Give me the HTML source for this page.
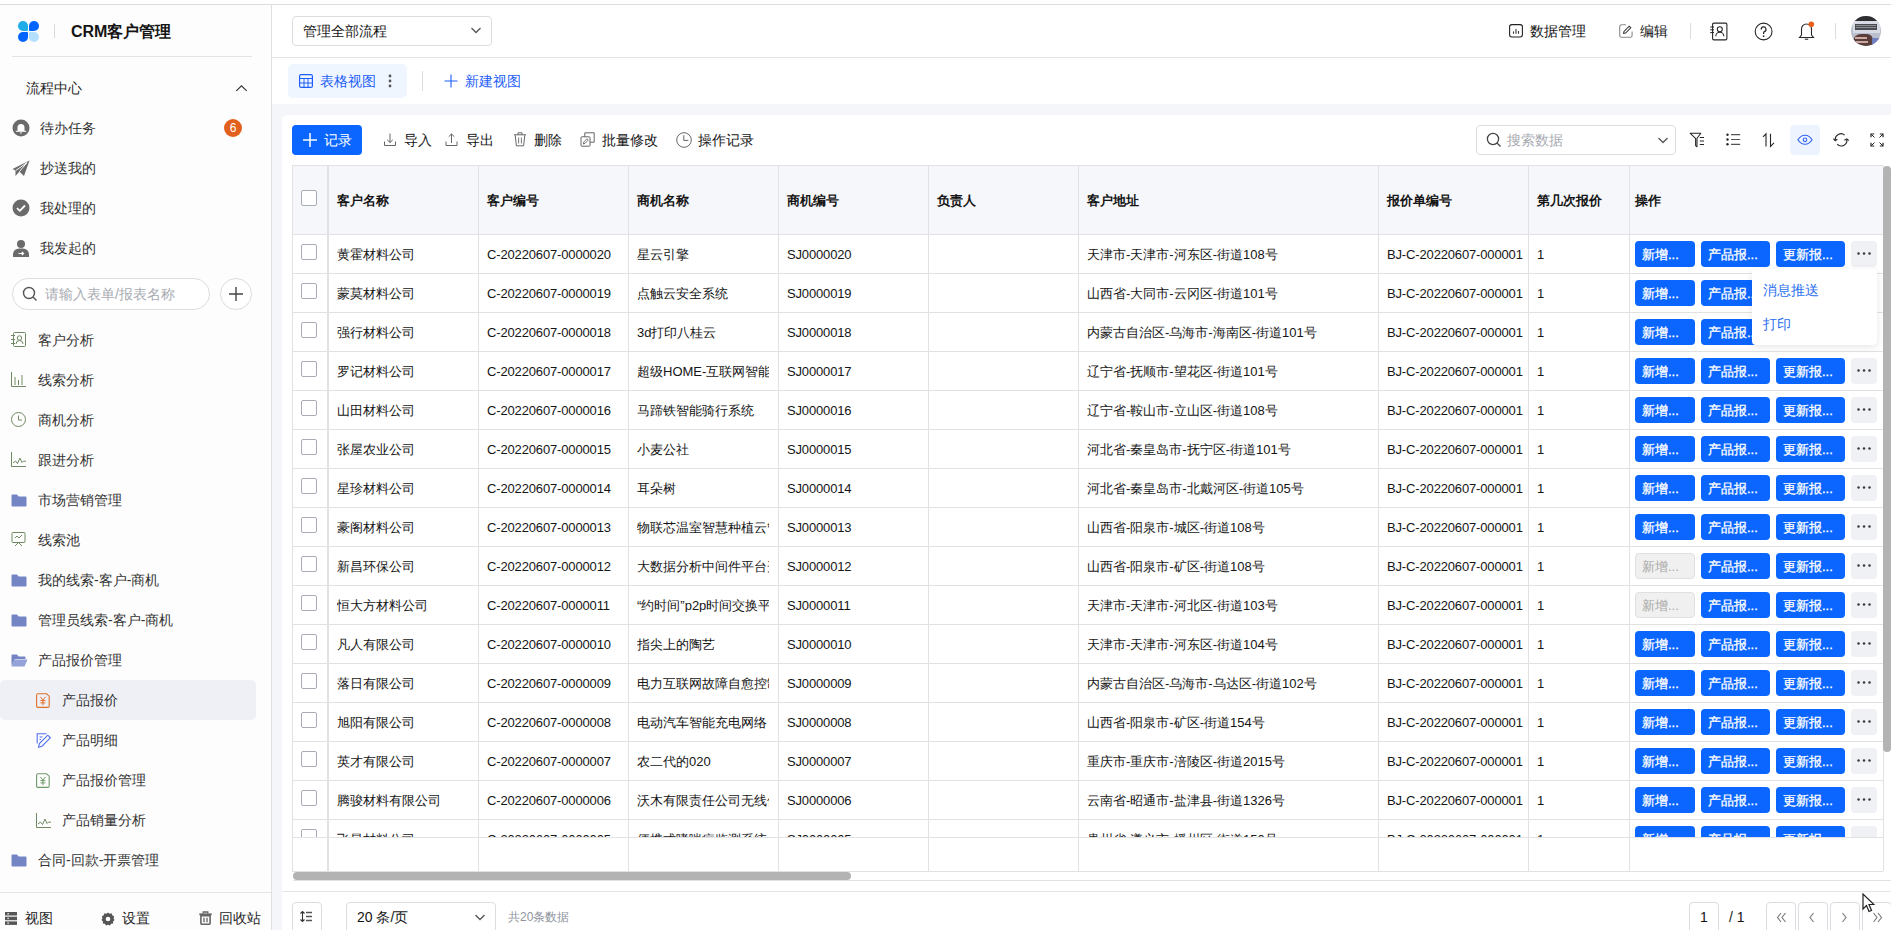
<!DOCTYPE html><html><head><meta charset="utf-8"><style>
*{box-sizing:border-box;margin:0;padding:0}
html,body{width:1891px;height:930px;overflow:hidden;background:#fff;font-family:"Liberation Sans",sans-serif;color:#151515}
.abs{position:absolute}
.t{position:absolute;white-space:nowrap;line-height:1}
svg{display:block}
</style></head><body>

<div class="abs" style="left:0;top:0;width:1891px;height:4px;background:#fff"></div>
<div class="abs" style="left:0;top:4px;width:1891px;height:1px;background:#dcdde0"></div>
<div class="abs" style="left:0;top:5px;width:271px;height:925px;background:#fdfdfd"></div>
<div class="abs" style="left:271px;top:5px;width:1px;height:925px;background:#dfe0e3"></div>
<div class="abs" style="left:18px;top:21px;width:9.5px;height:9.5px;border-radius:5px 5px 1px 5px;background:#1fade8"></div>
<div class="abs" style="left:29px;top:21px;width:9.5px;height:9.5px;border-radius:5px 5px 5px 1px;background:#0064ff"></div>
<div class="abs" style="left:18px;top:32px;width:9.5px;height:9.5px;border-radius:5px 1px 5px 5px;background:#0064ff"></div>
<div class="abs" style="left:29px;top:32px;width:9.5px;height:9.5px;border-radius:1px 5px 5px 5px;background:#b3e0fd"></div>
<div class="abs" style="left:54px;top:24px;width:1px;height:14px;background:#d9d9d9"></div>
<div class="t" style="left:71px;top:24px;font-size:16px;font-weight:bold;color:#151515">CRM客户管理</div>
<div class="abs" style="left:12px;top:56px;width:240px;height:1px;background:#e3e4e7"></div>
<div class="t" style="left:26px;top:81px;font-size:14px;color:#262626">流程中心</div>
<div class="abs" style="left:235px;top:85px"><svg width="13" height="7" viewBox="0 0 13 7" ><path d="M1.3 5.8L6.5 0.8L11.7 5.8" fill="none" stroke="#333" stroke-width="1.1"/></svg></div>
<div class="t" style="left:40px;top:121px;font-size:14px;color:#333">待办任务</div>
<div class="abs" style="left:12px;top:119px"><svg width="18" height="18" viewBox="0 0 18 18" ><circle cx="9" cy="9" r="8.5" fill="#6b6b6b"/><path d="M5.5 12V8.5A3.5 3.5 0 0 1 12.5 8.5V12Z" fill="#fff"/><rect x="3.8" y="11.8" width="10.4" height="1" fill="#fff"/><path d="M7.8 13.5H10.2L9 15Z" fill="#fff"/></svg></div>
<div class="abs" style="left:224px;top:119px;width:18px;height:18px;border-radius:9px;background:#e2601d;color:#fff;font-size:12px;line-height:18px;text-align:center">6</div>
<div class="t" style="left:40px;top:161px;font-size:14px;color:#333">抄送我的</div>
<div class="abs" style="left:12px;top:160px"><svg width="18" height="17" viewBox="0 0 18 17" ><path d="M0.5 9L17.5 0.5L12 16L7.5 11.5L3.5 16V10.5Z" fill="#6b6b6b"/><path d="M3.8 10.5L15 2.5L7.5 11.5" fill="none" stroke="#fdfdfd" stroke-width="1"/></svg></div>
<div class="t" style="left:40px;top:201px;font-size:14px;color:#333">我处理的</div>
<div class="abs" style="left:12px;top:199px"><svg width="18" height="18" viewBox="0 0 18 18" ><circle cx="9" cy="9" r="8.5" fill="#6b6b6b"/><path d="M5 9.2L7.8 11.8L13 6.5" fill="none" stroke="#fff" stroke-width="1.8"/></svg></div>
<div class="t" style="left:40px;top:241px;font-size:14px;color:#333">我发起的</div>
<div class="abs" style="left:12px;top:239px"><svg width="18" height="18" viewBox="0 0 18 18" ><circle cx="9" cy="5" r="4" fill="#6b6b6b"/><path d="M1 18V15A6 6 0 0 1 7 9.5H11A6 6 0 0 1 17 15V18Z" fill="#6b6b6b"/><path d="M6.5 14.5H11.5M9.8 12.8L11.5 14.5L9.8 16.2" fill="none" stroke="#fff" stroke-width="1.2"/></svg></div>
<div class="abs" style="left:12px;top:278px;width:198px;height:32px;border:1px solid #dcdde0;border-radius:16px;background:#fff"></div>
<div class="abs" style="left:22px;top:286px"><svg width="16" height="16" viewBox="0 0 16 16" ><circle cx="7" cy="7" r="5.5" fill="none" stroke="#555" stroke-width="1.4"/><path d="M11 11L14.5 14.5" stroke="#555" stroke-width="1.4"/></svg></div>
<div class="t" style="left:45px;top:287px;font-size:14px;color:#a8abb2">请输入表单/报表名称</div>
<div class="abs" style="left:220px;top:278px;width:32px;height:32px;border:1px solid #dcdde0;border-radius:16px;background:#fff"></div>
<div class="abs" style="left:229px;top:287px"><svg width="14" height="14" viewBox="0 0 14 14" ><path d="M7 0V14M0 7H14" stroke="#444" stroke-width="1.4"/></svg></div>
<div class="t" style="left:38px;top:333px;font-size:14px;color:#333">客户分析</div>
<div class="abs" style="left:11px;top:332px"><svg width="15" height="15" viewBox="0 0 15 15" ><rect x="2.5" y="0.5" width="12" height="14" rx="1" fill="none" stroke="#6f8a62" stroke-width="1"/><circle cx="8.5" cy="6" r="2.2" fill="none" stroke="#6f8a62"/><path d="M5 12A3.5 3.5 0 0 1 12 12" fill="none" stroke="#6f8a62"/><path d="M0 3.5H4M0 7.5H4M0 11.5H4" stroke="#6f8a62"/></svg></div>
<div class="t" style="left:38px;top:373px;font-size:14px;color:#333">线索分析</div>
<div class="abs" style="left:11px;top:372px"><svg width="15" height="15" viewBox="0 0 15 15" ><path d="M0.5 0V14.5H15" fill="none" stroke="#6f8a62"/><path d="M4 5V13M7.5 8V13M11 3V13" stroke="#6f8a62"/></svg></div>
<div class="t" style="left:38px;top:413px;font-size:14px;color:#333">商机分析</div>
<div class="abs" style="left:11px;top:412px"><svg width="15" height="15" viewBox="0 0 15 15" ><circle cx="7.5" cy="7.5" r="7" fill="none" stroke="#6f8a62"/><path d="M7.5 3.5V8H11" fill="none" stroke="#6f8a62"/></svg></div>
<div class="t" style="left:38px;top:453px;font-size:14px;color:#333">跟进分析</div>
<div class="abs" style="left:11px;top:452px"><svg width="15" height="15" viewBox="0 0 15 15" ><path d="M0.5 0V14.5H15" fill="none" stroke="#6f8a62"/><path d="M2 11L4.5 9L6.5 11.5L9 6L11 10.5L12.3 9.2H15" fill="none" stroke="#6f8a62"/></svg></div>
<div class="t" style="left:38px;top:493px;font-size:14px;color:#333">市场营销管理</div>
<div class="abs" style="left:11px;top:493px"><svg width="16" height="14" viewBox="0 0 16 14" ><path d="M0.5 2.5A1 1 0 0 1 1.5 1.5H6L7.5 3.5H14.5A1 1 0 0 1 15.5 4.5V12.5A1 1 0 0 1 14.5 13.5H1.5A1 1 0 0 1 0.5 12.5Z" fill="#7485c4"/></svg></div>
<div class="t" style="left:38px;top:533px;font-size:14px;color:#333">线索池</div>
<div class="abs" style="left:11px;top:532px"><svg width="15" height="15" viewBox="0 0 15 15" ><rect x="1" y="0.5" width="13" height="10" rx="1" fill="none" stroke="#6f8a62"/><path d="M4 6L6 4L8 6L11 3" fill="none" stroke="#6f8a62"/><path d="M4 14L7.5 10.5L11 14" fill="none" stroke="#6f8a62"/></svg></div>
<div class="t" style="left:38px;top:573px;font-size:14px;color:#333">我的线索-客户-商机</div>
<div class="abs" style="left:11px;top:573px"><svg width="16" height="14" viewBox="0 0 16 14" ><path d="M0.5 2.5A1 1 0 0 1 1.5 1.5H6L7.5 3.5H14.5A1 1 0 0 1 15.5 4.5V12.5A1 1 0 0 1 14.5 13.5H1.5A1 1 0 0 1 0.5 12.5Z" fill="#7485c4"/></svg></div>
<div class="t" style="left:38px;top:613px;font-size:14px;color:#333">管理员线索-客户-商机</div>
<div class="abs" style="left:11px;top:613px"><svg width="16" height="14" viewBox="0 0 16 14" ><path d="M0.5 2.5A1 1 0 0 1 1.5 1.5H6L7.5 3.5H14.5A1 1 0 0 1 15.5 4.5V12.5A1 1 0 0 1 14.5 13.5H1.5A1 1 0 0 1 0.5 12.5Z" fill="#7485c4"/></svg></div>
<div class="t" style="left:38px;top:653px;font-size:14px;color:#333">产品报价管理</div>
<div class="abs" style="left:11px;top:653px"><svg width="17" height="14" viewBox="0 0 17 14" ><path d="M0.5 2.5A1 1 0 0 1 1.5 1.5H6L7.5 3.5H13.5A1 1 0 0 1 14.5 4.5V6H4L0.5 13Z" fill="#7485c4"/><path d="M3.5 6.5H16.5L13.5 13.5H0.5Z" fill="#93a2d8"/></svg></div>
<div class="t" style="left:38px;top:853px;font-size:14px;color:#333">合同-回款-开票管理</div>
<div class="abs" style="left:11px;top:853px"><svg width="16" height="14" viewBox="0 0 16 14" ><path d="M0.5 2.5A1 1 0 0 1 1.5 1.5H6L7.5 3.5H14.5A1 1 0 0 1 15.5 4.5V12.5A1 1 0 0 1 14.5 13.5H1.5A1 1 0 0 1 0.5 12.5Z" fill="#7485c4"/></svg></div>
<div class="abs" style="left:0;top:680px;width:256px;height:40px;border-radius:5px;background:#eef0f5"></div>
<div class="t" style="left:62px;top:693px;font-size:14px;color:#333">产品报价</div>
<div class="abs" style="left:36px;top:693px"><svg width="14" height="15" viewBox="0 0 14 15" ><path d="M2 0.8H10.5L13.2 3.2V13A1.4 1.4 0 0 1 11.8 14.4H2A1.4 1.4 0 0 1 0.6 13V2.2A1.4 1.4 0 0 1 2 0.8Z" fill="none" stroke="#e0702a" stroke-width="1.1"/><path d="M4.2 3.8L6.9 7L9.6 3.8M6.9 7V12.2M4.4 7.6H9.4M4.4 9.9H9.4" fill="none" stroke="#e0702a" stroke-width="1"/></svg></div>
<div class="t" style="left:62px;top:733px;font-size:14px;color:#333">产品明细</div>
<div class="abs" style="left:36px;top:733px"><svg width="17" height="15" viewBox="0 0 17 15" ><path d="M10.5 0.8H1.2V10.5" fill="none" stroke="#4f6ff2" stroke-width="1.1"/><path d="M3.5 4H6.5M3.5 6.5H5" stroke="#4f6ff2" stroke-width="1.1"/><path d="M2.6 14.2L3.4 10.6L11.8 2.2L14.4 4.8L6 13.2Z" fill="none" stroke="#4f6ff2" stroke-width="1.1"/></svg></div>
<div class="t" style="left:62px;top:773px;font-size:14px;color:#333">产品报价管理</div>
<div class="abs" style="left:36px;top:773px"><svg width="14" height="15" viewBox="0 0 14 15" ><path d="M2 0.8H10.5L13.2 3.2V13A1.4 1.4 0 0 1 11.8 14.4H2A1.4 1.4 0 0 1 0.6 13V2.2A1.4 1.4 0 0 1 2 0.8Z" fill="none" stroke="#6f9a6a" stroke-width="1.1"/><path d="M4.2 3.8L6.9 7L9.6 3.8M6.9 7V12.2M4.4 7.6H9.4M4.4 9.9H9.4" fill="none" stroke="#6f9a6a" stroke-width="1"/></svg></div>
<div class="t" style="left:62px;top:813px;font-size:14px;color:#333">产品销量分析</div>
<div class="abs" style="left:36px;top:813px"><svg width="15" height="15" viewBox="0 0 15 15" ><path d="M0.5 0V14.5H15" fill="none" stroke="#6f8a62"/><path d="M2 11L4.5 9L6.5 11.5L9 6L11 10.5L12.3 9.2H15" fill="none" stroke="#6f8a62"/></svg></div>
<div class="abs" style="left:0;top:892px;width:271px;height:1px;background:#e3e4e7"></div>
<div class="abs" style="left:5px;top:912px"><svg width="12" height="13" viewBox="0 0 12 13" ><rect x="0" y="0" width="12" height="3.5" fill="#555"/><rect x="0" y="4.7" width="12" height="3.5" fill="#555"/><rect x="0" y="9.4" width="12" height="3.5" fill="#555"/><rect x="2.5" y="1" width="1.2" height="1.5" fill="#fff"/><rect x="2.5" y="5.7" width="1.2" height="1.5" fill="#fff"/><rect x="2.5" y="10.4" width="1.2" height="1.5" fill="#fff"/></svg></div>
<div class="t" style="left:25px;top:911px;font-size:14px;color:#262626">视图</div>
<div class="abs" style="left:101px;top:912px"><svg width="14" height="14" viewBox="0 0 14 14" ><path d="M7 0.5L8.6 1.8L10.6 1.3L11.2 3.3L13.1 4.2L12.6 6.2L13.5 8L12 9.4L12.2 11.5L10.1 11.8L9 13.5L7 12.7L5 13.5L3.9 11.8L1.8 11.5L2 9.4L0.5 8L1.4 6.2L0.9 4.2L2.8 3.3L3.4 1.3L5.4 1.8Z" fill="#555"/><circle cx="7" cy="7" r="2.3" fill="#fdfdfd"/></svg></div>
<div class="t" style="left:122px;top:911px;font-size:14px;color:#262626">设置</div>
<div class="abs" style="left:199px;top:911px"><svg width="13" height="14" viewBox="0 0 13 14" ><path d="M4.2 2.5V1H8.8V2.5" fill="none" stroke="#666" stroke-width="1.3"/><rect x="0.3" y="2.4" width="12.4" height="1.8" fill="#666"/><path d="M1.9 4.8H11.1V12.2A1.2 1.2 0 0 1 9.9 13.4H3.1A1.2 1.2 0 0 1 1.9 12.2Z" fill="none" stroke="#666" stroke-width="1.6"/><path d="M5 6.8V11.2M8 6.8V11.2" stroke="#666" stroke-width="1.3"/></svg></div>
<div class="t" style="left:219px;top:911px;font-size:14px;color:#262626">回收站</div>
<div class="abs" style="left:272px;top:57px;width:1619px;height:1px;background:#e3e4e7"></div>
<div class="abs" style="left:292px;top:16px;width:200px;height:30px;border:1px solid #dcdde0;border-radius:4px;background:#fff"></div>
<div class="t" style="left:303px;top:24px;font-size:14px;color:#151515">管理全部流程</div>
<div class="abs" style="left:471px;top:27px"><svg width="10" height="7" viewBox="0 0 10 7" ><path d="M0.5 1L5 5.5L9.5 1" fill="none" stroke="#555" stroke-width="1.3"/></svg></div>
<div class="abs" style="left:1509px;top:24px"><svg width="14" height="14" viewBox="0 0 14 14" ><rect x="0.6" y="0.6" width="12.8" height="12.4" rx="2.2" fill="none" stroke="#222" stroke-width="1.1"/><path d="M4.5 7.5V9.8M7 5V9.8M9.5 7V9.8" stroke="#333" stroke-width="1.1"/></svg></div>
<div class="t" style="left:1530px;top:24px;font-size:14px;color:#151515">数据管理</div>
<div class="abs" style="left:1619px;top:24px"><svg width="14" height="14" viewBox="0 0 14 14" ><path d="M7 0.8H2.5A1.8 1.8 0 0 0 0.7 2.6V11.4A1.8 1.8 0 0 0 2.5 13.2H11.3A1.8 1.8 0 0 0 13.1 11.4V7.5" fill="none" stroke="#8a8a8a" stroke-width="1.1"/><path d="M4.6 9.4L5 7.4L10.2 2.2L11.8 3.8L6.6 9Z" fill="none" stroke="#333" stroke-width="1.05"/></svg></div>
<div class="t" style="left:1640px;top:24px;font-size:14px;color:#151515">编辑</div>
<div class="abs" style="left:1690px;top:23px;width:1px;height:16px;background:#dcdde0"></div>
<div class="abs" style="left:1709px;top:22px"><svg width="19" height="19" viewBox="0 0 19 19" ><rect x="3.6" y="1.1" width="14.3" height="16.8" rx="1.3" fill="none" stroke="#262626" stroke-width="1.1"/><circle cx="10.8" cy="7.3" r="2.5" fill="none" stroke="#262626" stroke-width="1.1"/><path d="M6.8 14.3A4 4 0 0 1 14.8 14.3" fill="none" stroke="#262626" stroke-width="1.1"/><path d="M1.2 5H5M1.2 7.8H5M1.2 10.6H5" stroke="#262626" stroke-width="1"/></svg></div>
<div class="abs" style="left:1754px;top:22px"><svg width="19" height="19" viewBox="0 0 19 19" ><circle cx="9.6" cy="9.5" r="8.4" fill="none" stroke="#262626" stroke-width="1.1"/><path d="M7.2 7.4A2.4 2.4 0 1 1 10.4 9.6C9.8 9.9 9.6 10.3 9.6 11V12" fill="none" stroke="#262626" stroke-width="1.2"/><circle cx="9.6" cy="14.2" r="0.85" fill="#262626"/></svg></div>
<div class="abs" style="left:1797px;top:21px"><svg width="20" height="20" viewBox="0 0 20 20" ><path d="M9.5 3A5 5 0 0 1 14.5 8V14L16.5 16.5H2.5L4.5 14V8A5 5 0 0 1 9.5 3Z" fill="none" stroke="#262626" stroke-width="1.1"/><path d="M7.8 18.2H11.2" stroke="#262626" stroke-width="1.1"/><circle cx="14.3" cy="3.2" r="2.8" fill="#e8601c"/></svg></div>
<div class="abs" style="left:1835px;top:23px;width:1px;height:16px;background:#dcdde0"></div>
<div class="abs" style="left:1851px;top:16px;width:30px;height:30px;border-radius:15px;overflow:hidden;background:#b9bfcc"><div class="abs" style="left:0;top:0;width:30px;height:5px;background:#2e2e30"></div><div class="abs" style="left:2px;top:5px;width:27px;height:12px;background:#d6dbe6"></div><div class="abs" style="left:4px;top:8px;width:22px;height:6px;background:#4a4c52"></div><div class="abs" style="left:5px;top:9px;width:20px;height:1px;background:#8d9099"></div><div class="abs" style="left:5px;top:11px;width:20px;height:1px;background:#8d9099"></div><div class="abs" style="left:2px;top:18px;width:20px;height:12px;border-radius:8px 6px 0 0;background:#5a3e3c"></div><div class="abs" style="left:4px;top:21px;width:12px;height:2px;background:#c9a9a0"></div><div class="abs" style="left:5px;top:25px;width:12px;height:2px;background:#c9a9a0"></div><div class="abs" style="left:21px;top:22px;width:9px;height:8px;background:#6f7ec0"></div></div>
<div class="abs" style="left:288px;top:64px;width:119px;height:34px;border-radius:5px;background:#f0f6ff"></div>
<div class="abs" style="left:299px;top:74px"><svg width="14" height="14" viewBox="0 0 14 14" ><rect x="0.6" y="0.6" width="12.8" height="12.8" rx="1.5" fill="none" stroke="#1d5ef8" stroke-width="1.2"/><path d="M0.6 4.5H13.4M0.6 9H13.4M5 4.5V13.4M9 4.5V13.4" stroke="#1d5ef8" stroke-width="1"/></svg></div>
<div class="t" style="left:320px;top:74px;font-size:14px;color:#1d5ef8">表格视图</div>
<div class="abs" style="left:388px;top:74px"><svg width="4" height="14" viewBox="0 0 4 14" ><circle cx="2" cy="2" r="1.4" fill="#555"/><circle cx="2" cy="7" r="1.4" fill="#555"/><circle cx="2" cy="12" r="1.4" fill="#555"/></svg></div>
<div class="abs" style="left:422px;top:71px;width:1px;height:20px;background:#dcdde0"></div>
<div class="abs" style="left:444px;top:74px"><svg width="14" height="14" viewBox="0 0 14 14" ><path d="M7 0.5V13.5M0.5 7H13.5" stroke="#1d5ef8" stroke-width="1.1"/></svg></div>
<div class="t" style="left:465px;top:74px;font-size:14px;color:#1d5ef8">新建视图</div>
<div class="abs" style="left:272px;top:104px;width:1619px;height:826px;background:#f5f6f9"></div>
<div class="abs" style="left:282px;top:115px;width:1609px;height:815px;background:#fff;border-radius:5px 0 0 0"></div>
<div class="abs" style="left:293px;top:880px;width:1598px;height:1px;background:#e2e2e4"></div>
<div class="abs" style="left:282px;top:891px;width:1609px;height:1px;background:#e3e4e7"></div>
<div class="abs" style="left:282px;top:892px;width:1609px;height:38px;background:#fff"></div>
<div class="abs" style="left:292px;top:125px;width:70px;height:30px;border-radius:4px;background:#0a66ff"></div>
<div class="abs" style="left:303px;top:133px"><svg width="14" height="14" viewBox="0 0 14 14" ><path d="M7 0V14M0 7H14" stroke="#fff" stroke-width="1.5"/></svg></div>
<div class="t" style="left:324px;top:133px;font-size:14px;color:#fff">记录</div>
<div class="abs" style="left:383px;top:133px"><svg width="14" height="14" viewBox="0 0 14 14" ><path d="M7 0.5V9.5M4.2 6.8L7 9.5L9.8 6.8" fill="none" stroke="#666" stroke-width="1"/><path d="M1.5 8.5V12.5H12.5V8.5" fill="none" stroke="#666" stroke-width="1"/></svg></div>
<div class="t" style="left:404px;top:133px;font-size:14px;color:#151515">导入</div>
<div class="abs" style="left:445px;top:133px"><svg width="14" height="14" viewBox="0 0 14 14" ><path d="M6.5 1V10M3.7 3.7L6.5 1L9.3 3.7" fill="none" stroke="#666" stroke-width="1"/><path d="M1 8.5V12.5H12V8.5" fill="none" stroke="#666" stroke-width="1"/></svg></div>
<div class="t" style="left:466px;top:133px;font-size:14px;color:#151515">导出</div>
<div class="abs" style="left:513px;top:132px"><svg width="14" height="15" viewBox="0 0 14 15" ><path d="M1 2.8H13M5 2.8V0.8H9V2.8" fill="none" stroke="#666" stroke-width="1"/><path d="M2.2 3.2L3.4 13.8H10.6L11.8 3.2" fill="none" stroke="#666" stroke-width="1"/><path d="M5.6 5.5V11.5M8.4 5.5V11.5" stroke="#666" stroke-width="0.9"/></svg></div>
<div class="t" style="left:534px;top:133px;font-size:14px;color:#151515">删除</div>
<div class="abs" style="left:580px;top:132px"><svg width="15" height="15" viewBox="0 0 15 15" ><rect x="1" y="4.8" width="9" height="9.4" rx="0.8" fill="none" stroke="#666" stroke-width="1"/><path d="M4.8 4.8V0.8H14.2V10.2H10" fill="none" stroke="#666" stroke-width="1"/><path d="M3.3 12L3.8 10L7 6.8L8.3 8.1L5.1 11.3Z" fill="none" stroke="#666" stroke-width="0.9"/></svg></div>
<div class="t" style="left:602px;top:133px;font-size:14px;color:#151515">批量修改</div>
<div class="abs" style="left:676px;top:132px"><svg width="16" height="16" viewBox="0 0 16 16" ><circle cx="8" cy="8" r="7.3" fill="none" stroke="#666" stroke-width="1"/><path d="M7.8 3.2V8.4H12.4" fill="none" stroke="#666" stroke-width="1"/></svg></div>
<div class="t" style="left:698px;top:133px;font-size:14px;color:#151515">操作记录</div>
<div class="abs" style="left:1476px;top:125px;width:200px;height:30px;border:1px solid #dcdde0;border-radius:4px;background:#fff"></div>
<div class="abs" style="left:1486px;top:132px"><svg width="16" height="16" viewBox="0 0 16 16" ><circle cx="7" cy="7" r="5.6" fill="none" stroke="#444" stroke-width="1.3"/><path d="M11 11L14.5 14.5" stroke="#444" stroke-width="1.3"/></svg></div>
<div class="t" style="left:1507px;top:133px;font-size:14px;color:#a8abb2">搜索数据</div>
<div class="abs" style="left:1658px;top:137px"><svg width="10" height="7" viewBox="0 0 10 7" ><path d="M0.5 1L5 5.5L9.5 1" fill="none" stroke="#555" stroke-width="1.3"/></svg></div>
<div class="abs" style="left:1790px;top:125px;width:30px;height:30px;border-radius:4px;background:#eef4ff"></div>
<div class="abs" style="left:1689px;top:132px"><svg width="16" height="16" viewBox="0 0 16 16" ><path d="M1.2 1.3H11.8L8 6.3V14.8L6.6 13.6V6.3Z" fill="none" stroke="#262626" stroke-width="1.05" stroke-linejoin="round"/><path d="M10.8 5.5H15M10.8 9H15M10.8 12.5H15" stroke="#262626" stroke-width="1.1"/></svg></div>
<div class="abs" style="left:1725px;top:132px"><svg width="16" height="16" viewBox="0 0 16 16" ><circle cx="2.5" cy="2.7" r="1.2" fill="#262626"/><circle cx="2.5" cy="7.5" r="1.2" fill="#262626"/><circle cx="2.5" cy="12.3" r="1.2" fill="#262626"/><path d="M6 2.7H15.2M6 7.5H15.2M6 12.3H15.2" stroke="#555" stroke-width="1.2"/></svg></div>
<div class="abs" style="left:1761px;top:132px"><svg width="16" height="16" viewBox="0 0 16 16" ><path d="M5 14.5V1.8L2 4.8" fill="none" stroke="#262626" stroke-width="1.1"/><path d="M9.5 1.8V14.3L13 10.8" fill="none" stroke="#262626" stroke-width="1.1"/></svg></div>
<div class="abs" style="left:1797px;top:132px"><svg width="16" height="16" viewBox="0 0 16 16" ><path d="M0.9 7.8C2.8 4.8 5.2 3.3 8 3.3S13.2 4.8 15.1 7.8C13.2 10.8 10.8 12.3 8 12.3S2.8 10.8 0.9 7.8Z" fill="none" stroke="#2f62f0" stroke-width="1.1"/><circle cx="8" cy="7.8" r="1.8" fill="none" stroke="#2f62f0" stroke-width="1.1"/></svg></div>
<div class="abs" style="left:1833px;top:132px"><svg width="16" height="16" viewBox="0 0 16 16" ><path d="M11.6 3.2A5.6 5.6 0 0 0 2.3 8" fill="none" stroke="#262626" stroke-width="1.1"/><path d="M0.4 6.6L2.2 8.7L4.4 7.2" fill="none" stroke="#262626" stroke-width="1.1"/><path d="M4.2 12.2A5.6 5.6 0 0 0 13.8 7.6" fill="none" stroke="#262626" stroke-width="1.1"/><path d="M11.4 8.2L13.8 7L15.8 8.6" fill="none" stroke="#262626" stroke-width="1.1"/></svg></div>
<div class="abs" style="left:1869px;top:132px"><svg width="16" height="16" viewBox="0 0 16 16" ><path d="M2 5.2V2H5.2M10.8 2H14V5.2M14 10.8V14H10.8M5.2 14H2V10.8" fill="none" stroke="#262626" stroke-width="1.2"/><path d="M2 2L5.5 5.5M14 2L10.5 5.5M14 14L10.5 10.5M2 14L5.5 10.5" stroke="#262626" stroke-width="1"/></svg></div>
<div class="abs" style="left:292px;top:165px;width:1591px;height:69px;background:#f5f7fa"></div>
<div class="abs" style="left:292px;top:234px;width:1591px;height:603px;overflow:hidden">
<div class="abs" style="left:0;top:0px;width:1591px;height:1px;background:#e2e2e4"></div>
<div class="abs" style="left:9px;top:10px;width:16px;height:16px;border:1px solid #a9acb8;border-radius:2px;background:#fff"></div>
<div class="t" style="left:45px;top:14px;width:132px;overflow:hidden;font-size:13px;letter-spacing:0px;color:#151515">黄霍材料公司</div>
<div class="t" style="left:195px;top:14px;width:132px;overflow:hidden;font-size:13px;letter-spacing:-0.15px;color:#151515">C-20220607-0000020</div>
<div class="t" style="left:345px;top:14px;width:132px;overflow:hidden;font-size:13px;letter-spacing:0px;color:#151515">星云引擎</div>
<div class="t" style="left:495px;top:14px;width:132px;overflow:hidden;font-size:13px;letter-spacing:-0.15px;color:#151515">SJ0000020</div>
<div class="t" style="left:645px;top:14px;width:132px;overflow:hidden;font-size:13px;letter-spacing:0px;color:#151515"></div>
<div class="t" style="left:795px;top:14px;width:282px;overflow:hidden;font-size:13px;letter-spacing:0px;color:#151515">天津市-天津市-河东区-街道108号</div>
<div class="t" style="left:1095px;top:14px;width:146px;overflow:hidden;font-size:13px;letter-spacing:-0.15px;color:#151515">BJ-C-20220607-000001</div>
<div class="t" style="left:1245px;top:14px;width:83px;overflow:hidden;font-size:13px;letter-spacing:0px;color:#151515">1</div>
<div class="abs" style="left:1343px;top:7px;width:60px;height:26px;border-radius:4px;background:#0a66ff;color:#fff;font-size:13px;line-height:28px;padding-left:7px;-webkit-text-stroke:0.3px #fff">新增...</div>
<div class="abs" style="left:1409px;top:7px;width:69px;height:26px;border-radius:4px;background:#0a66ff;color:#fff;font-size:13px;line-height:28px;padding-left:7px;-webkit-text-stroke:0.3px #fff">产品报...</div>
<div class="abs" style="left:1484px;top:7px;width:69px;height:26px;border-radius:4px;background:#0a66ff;color:#fff;font-size:13px;line-height:28px;padding-left:7px;-webkit-text-stroke:0.3px #fff">更新报...</div>
<div class="abs" style="left:1559px;top:7px;width:26px;height:26px;border-radius:4px;background:#f0f1f4"></div>
<div class="abs" style="left:1565px;top:18px"><svg width="14" height="3" viewBox="0 0 14 3" ><circle cx="1.5" cy="1.5" r="1.25" fill="#3a3a3a"/><circle cx="7" cy="1.5" r="1.25" fill="#3a3a3a"/><circle cx="12.5" cy="1.5" r="1.25" fill="#3a3a3a"/></svg></div>
<div class="abs" style="left:0;top:39px;width:1591px;height:1px;background:#e2e2e4"></div>
<div class="abs" style="left:9px;top:49px;width:16px;height:16px;border:1px solid #a9acb8;border-radius:2px;background:#fff"></div>
<div class="t" style="left:45px;top:53px;width:132px;overflow:hidden;font-size:13px;letter-spacing:0px;color:#151515">蒙莫材料公司</div>
<div class="t" style="left:195px;top:53px;width:132px;overflow:hidden;font-size:13px;letter-spacing:-0.15px;color:#151515">C-20220607-0000019</div>
<div class="t" style="left:345px;top:53px;width:132px;overflow:hidden;font-size:13px;letter-spacing:0px;color:#151515">点触云安全系统</div>
<div class="t" style="left:495px;top:53px;width:132px;overflow:hidden;font-size:13px;letter-spacing:-0.15px;color:#151515">SJ0000019</div>
<div class="t" style="left:645px;top:53px;width:132px;overflow:hidden;font-size:13px;letter-spacing:0px;color:#151515"></div>
<div class="t" style="left:795px;top:53px;width:282px;overflow:hidden;font-size:13px;letter-spacing:0px;color:#151515">山西省-大同市-云冈区-街道101号</div>
<div class="t" style="left:1095px;top:53px;width:146px;overflow:hidden;font-size:13px;letter-spacing:-0.15px;color:#151515">BJ-C-20220607-000001</div>
<div class="t" style="left:1245px;top:53px;width:83px;overflow:hidden;font-size:13px;letter-spacing:0px;color:#151515">1</div>
<div class="abs" style="left:1343px;top:46px;width:60px;height:26px;border-radius:4px;background:#0a66ff;color:#fff;font-size:13px;line-height:28px;padding-left:7px;-webkit-text-stroke:0.3px #fff">新增...</div>
<div class="abs" style="left:1409px;top:46px;width:69px;height:26px;border-radius:4px;background:#0a66ff;color:#fff;font-size:13px;line-height:28px;padding-left:7px;-webkit-text-stroke:0.3px #fff">产品报...</div>
<div class="abs" style="left:1484px;top:46px;width:69px;height:26px;border-radius:4px;background:#0a66ff;color:#fff;font-size:13px;line-height:28px;padding-left:7px;-webkit-text-stroke:0.3px #fff">更新报...</div>
<div class="abs" style="left:1559px;top:46px;width:26px;height:26px;border-radius:4px;background:#f0f1f4"></div>
<div class="abs" style="left:1565px;top:57px"><svg width="14" height="3" viewBox="0 0 14 3" ><circle cx="1.5" cy="1.5" r="1.25" fill="#3a3a3a"/><circle cx="7" cy="1.5" r="1.25" fill="#3a3a3a"/><circle cx="12.5" cy="1.5" r="1.25" fill="#3a3a3a"/></svg></div>
<div class="abs" style="left:0;top:78px;width:1591px;height:1px;background:#e2e2e4"></div>
<div class="abs" style="left:9px;top:88px;width:16px;height:16px;border:1px solid #a9acb8;border-radius:2px;background:#fff"></div>
<div class="t" style="left:45px;top:92px;width:132px;overflow:hidden;font-size:13px;letter-spacing:0px;color:#151515">强行材料公司</div>
<div class="t" style="left:195px;top:92px;width:132px;overflow:hidden;font-size:13px;letter-spacing:-0.15px;color:#151515">C-20220607-0000018</div>
<div class="t" style="left:345px;top:92px;width:132px;overflow:hidden;font-size:13px;letter-spacing:0px;color:#151515">3d打印八桂云</div>
<div class="t" style="left:495px;top:92px;width:132px;overflow:hidden;font-size:13px;letter-spacing:-0.15px;color:#151515">SJ0000018</div>
<div class="t" style="left:645px;top:92px;width:132px;overflow:hidden;font-size:13px;letter-spacing:0px;color:#151515"></div>
<div class="t" style="left:795px;top:92px;width:282px;overflow:hidden;font-size:13px;letter-spacing:0px;color:#151515">内蒙古自治区-乌海市-海南区-街道101号</div>
<div class="t" style="left:1095px;top:92px;width:146px;overflow:hidden;font-size:13px;letter-spacing:-0.15px;color:#151515">BJ-C-20220607-000001</div>
<div class="t" style="left:1245px;top:92px;width:83px;overflow:hidden;font-size:13px;letter-spacing:0px;color:#151515">1</div>
<div class="abs" style="left:1343px;top:85px;width:60px;height:26px;border-radius:4px;background:#0a66ff;color:#fff;font-size:13px;line-height:28px;padding-left:7px;-webkit-text-stroke:0.3px #fff">新增...</div>
<div class="abs" style="left:1409px;top:85px;width:69px;height:26px;border-radius:4px;background:#0a66ff;color:#fff;font-size:13px;line-height:28px;padding-left:7px;-webkit-text-stroke:0.3px #fff">产品报...</div>
<div class="abs" style="left:1484px;top:85px;width:69px;height:26px;border-radius:4px;background:#0a66ff;color:#fff;font-size:13px;line-height:28px;padding-left:7px;-webkit-text-stroke:0.3px #fff">更新报...</div>
<div class="abs" style="left:1559px;top:85px;width:26px;height:26px;border-radius:4px;background:#f0f1f4"></div>
<div class="abs" style="left:1565px;top:96px"><svg width="14" height="3" viewBox="0 0 14 3" ><circle cx="1.5" cy="1.5" r="1.25" fill="#3a3a3a"/><circle cx="7" cy="1.5" r="1.25" fill="#3a3a3a"/><circle cx="12.5" cy="1.5" r="1.25" fill="#3a3a3a"/></svg></div>
<div class="abs" style="left:0;top:117px;width:1591px;height:1px;background:#e2e2e4"></div>
<div class="abs" style="left:9px;top:127px;width:16px;height:16px;border:1px solid #a9acb8;border-radius:2px;background:#fff"></div>
<div class="t" style="left:45px;top:131px;width:132px;overflow:hidden;font-size:13px;letter-spacing:0px;color:#151515">罗记材料公司</div>
<div class="t" style="left:195px;top:131px;width:132px;overflow:hidden;font-size:13px;letter-spacing:-0.15px;color:#151515">C-20220607-0000017</div>
<div class="t" style="left:345px;top:131px;width:132px;overflow:hidden;font-size:13px;letter-spacing:0px;color:#151515">超级HOME-互联网智能</div>
<div class="t" style="left:495px;top:131px;width:132px;overflow:hidden;font-size:13px;letter-spacing:-0.15px;color:#151515">SJ0000017</div>
<div class="t" style="left:645px;top:131px;width:132px;overflow:hidden;font-size:13px;letter-spacing:0px;color:#151515"></div>
<div class="t" style="left:795px;top:131px;width:282px;overflow:hidden;font-size:13px;letter-spacing:0px;color:#151515">辽宁省-抚顺市-望花区-街道101号</div>
<div class="t" style="left:1095px;top:131px;width:146px;overflow:hidden;font-size:13px;letter-spacing:-0.15px;color:#151515">BJ-C-20220607-000001</div>
<div class="t" style="left:1245px;top:131px;width:83px;overflow:hidden;font-size:13px;letter-spacing:0px;color:#151515">1</div>
<div class="abs" style="left:1343px;top:124px;width:60px;height:26px;border-radius:4px;background:#0a66ff;color:#fff;font-size:13px;line-height:28px;padding-left:7px;-webkit-text-stroke:0.3px #fff">新增...</div>
<div class="abs" style="left:1409px;top:124px;width:69px;height:26px;border-radius:4px;background:#0a66ff;color:#fff;font-size:13px;line-height:28px;padding-left:7px;-webkit-text-stroke:0.3px #fff">产品报...</div>
<div class="abs" style="left:1484px;top:124px;width:69px;height:26px;border-radius:4px;background:#0a66ff;color:#fff;font-size:13px;line-height:28px;padding-left:7px;-webkit-text-stroke:0.3px #fff">更新报...</div>
<div class="abs" style="left:1559px;top:124px;width:26px;height:26px;border-radius:4px;background:#f0f1f4"></div>
<div class="abs" style="left:1565px;top:135px"><svg width="14" height="3" viewBox="0 0 14 3" ><circle cx="1.5" cy="1.5" r="1.25" fill="#3a3a3a"/><circle cx="7" cy="1.5" r="1.25" fill="#3a3a3a"/><circle cx="12.5" cy="1.5" r="1.25" fill="#3a3a3a"/></svg></div>
<div class="abs" style="left:0;top:156px;width:1591px;height:1px;background:#e2e2e4"></div>
<div class="abs" style="left:9px;top:166px;width:16px;height:16px;border:1px solid #a9acb8;border-radius:2px;background:#fff"></div>
<div class="t" style="left:45px;top:170px;width:132px;overflow:hidden;font-size:13px;letter-spacing:0px;color:#151515">山田材料公司</div>
<div class="t" style="left:195px;top:170px;width:132px;overflow:hidden;font-size:13px;letter-spacing:-0.15px;color:#151515">C-20220607-0000016</div>
<div class="t" style="left:345px;top:170px;width:132px;overflow:hidden;font-size:13px;letter-spacing:0px;color:#151515">马蹄铁智能骑行系统</div>
<div class="t" style="left:495px;top:170px;width:132px;overflow:hidden;font-size:13px;letter-spacing:-0.15px;color:#151515">SJ0000016</div>
<div class="t" style="left:645px;top:170px;width:132px;overflow:hidden;font-size:13px;letter-spacing:0px;color:#151515"></div>
<div class="t" style="left:795px;top:170px;width:282px;overflow:hidden;font-size:13px;letter-spacing:0px;color:#151515">辽宁省-鞍山市-立山区-街道108号</div>
<div class="t" style="left:1095px;top:170px;width:146px;overflow:hidden;font-size:13px;letter-spacing:-0.15px;color:#151515">BJ-C-20220607-000001</div>
<div class="t" style="left:1245px;top:170px;width:83px;overflow:hidden;font-size:13px;letter-spacing:0px;color:#151515">1</div>
<div class="abs" style="left:1343px;top:163px;width:60px;height:26px;border-radius:4px;background:#0a66ff;color:#fff;font-size:13px;line-height:28px;padding-left:7px;-webkit-text-stroke:0.3px #fff">新增...</div>
<div class="abs" style="left:1409px;top:163px;width:69px;height:26px;border-radius:4px;background:#0a66ff;color:#fff;font-size:13px;line-height:28px;padding-left:7px;-webkit-text-stroke:0.3px #fff">产品报...</div>
<div class="abs" style="left:1484px;top:163px;width:69px;height:26px;border-radius:4px;background:#0a66ff;color:#fff;font-size:13px;line-height:28px;padding-left:7px;-webkit-text-stroke:0.3px #fff">更新报...</div>
<div class="abs" style="left:1559px;top:163px;width:26px;height:26px;border-radius:4px;background:#f0f1f4"></div>
<div class="abs" style="left:1565px;top:174px"><svg width="14" height="3" viewBox="0 0 14 3" ><circle cx="1.5" cy="1.5" r="1.25" fill="#3a3a3a"/><circle cx="7" cy="1.5" r="1.25" fill="#3a3a3a"/><circle cx="12.5" cy="1.5" r="1.25" fill="#3a3a3a"/></svg></div>
<div class="abs" style="left:0;top:195px;width:1591px;height:1px;background:#e2e2e4"></div>
<div class="abs" style="left:9px;top:205px;width:16px;height:16px;border:1px solid #a9acb8;border-radius:2px;background:#fff"></div>
<div class="t" style="left:45px;top:209px;width:132px;overflow:hidden;font-size:13px;letter-spacing:0px;color:#151515">张屋农业公司</div>
<div class="t" style="left:195px;top:209px;width:132px;overflow:hidden;font-size:13px;letter-spacing:-0.15px;color:#151515">C-20220607-0000015</div>
<div class="t" style="left:345px;top:209px;width:132px;overflow:hidden;font-size:13px;letter-spacing:0px;color:#151515">小麦公社</div>
<div class="t" style="left:495px;top:209px;width:132px;overflow:hidden;font-size:13px;letter-spacing:-0.15px;color:#151515">SJ0000015</div>
<div class="t" style="left:645px;top:209px;width:132px;overflow:hidden;font-size:13px;letter-spacing:0px;color:#151515"></div>
<div class="t" style="left:795px;top:209px;width:282px;overflow:hidden;font-size:13px;letter-spacing:0px;color:#151515">河北省-秦皇岛市-抚宁区-街道101号</div>
<div class="t" style="left:1095px;top:209px;width:146px;overflow:hidden;font-size:13px;letter-spacing:-0.15px;color:#151515">BJ-C-20220607-000001</div>
<div class="t" style="left:1245px;top:209px;width:83px;overflow:hidden;font-size:13px;letter-spacing:0px;color:#151515">1</div>
<div class="abs" style="left:1343px;top:202px;width:60px;height:26px;border-radius:4px;background:#0a66ff;color:#fff;font-size:13px;line-height:28px;padding-left:7px;-webkit-text-stroke:0.3px #fff">新增...</div>
<div class="abs" style="left:1409px;top:202px;width:69px;height:26px;border-radius:4px;background:#0a66ff;color:#fff;font-size:13px;line-height:28px;padding-left:7px;-webkit-text-stroke:0.3px #fff">产品报...</div>
<div class="abs" style="left:1484px;top:202px;width:69px;height:26px;border-radius:4px;background:#0a66ff;color:#fff;font-size:13px;line-height:28px;padding-left:7px;-webkit-text-stroke:0.3px #fff">更新报...</div>
<div class="abs" style="left:1559px;top:202px;width:26px;height:26px;border-radius:4px;background:#f0f1f4"></div>
<div class="abs" style="left:1565px;top:213px"><svg width="14" height="3" viewBox="0 0 14 3" ><circle cx="1.5" cy="1.5" r="1.25" fill="#3a3a3a"/><circle cx="7" cy="1.5" r="1.25" fill="#3a3a3a"/><circle cx="12.5" cy="1.5" r="1.25" fill="#3a3a3a"/></svg></div>
<div class="abs" style="left:0;top:234px;width:1591px;height:1px;background:#e2e2e4"></div>
<div class="abs" style="left:9px;top:244px;width:16px;height:16px;border:1px solid #a9acb8;border-radius:2px;background:#fff"></div>
<div class="t" style="left:45px;top:248px;width:132px;overflow:hidden;font-size:13px;letter-spacing:0px;color:#151515">星珍材料公司</div>
<div class="t" style="left:195px;top:248px;width:132px;overflow:hidden;font-size:13px;letter-spacing:-0.15px;color:#151515">C-20220607-0000014</div>
<div class="t" style="left:345px;top:248px;width:132px;overflow:hidden;font-size:13px;letter-spacing:0px;color:#151515">耳朵树</div>
<div class="t" style="left:495px;top:248px;width:132px;overflow:hidden;font-size:13px;letter-spacing:-0.15px;color:#151515">SJ0000014</div>
<div class="t" style="left:645px;top:248px;width:132px;overflow:hidden;font-size:13px;letter-spacing:0px;color:#151515"></div>
<div class="t" style="left:795px;top:248px;width:282px;overflow:hidden;font-size:13px;letter-spacing:0px;color:#151515">河北省-秦皇岛市-北戴河区-街道105号</div>
<div class="t" style="left:1095px;top:248px;width:146px;overflow:hidden;font-size:13px;letter-spacing:-0.15px;color:#151515">BJ-C-20220607-000001</div>
<div class="t" style="left:1245px;top:248px;width:83px;overflow:hidden;font-size:13px;letter-spacing:0px;color:#151515">1</div>
<div class="abs" style="left:1343px;top:241px;width:60px;height:26px;border-radius:4px;background:#0a66ff;color:#fff;font-size:13px;line-height:28px;padding-left:7px;-webkit-text-stroke:0.3px #fff">新增...</div>
<div class="abs" style="left:1409px;top:241px;width:69px;height:26px;border-radius:4px;background:#0a66ff;color:#fff;font-size:13px;line-height:28px;padding-left:7px;-webkit-text-stroke:0.3px #fff">产品报...</div>
<div class="abs" style="left:1484px;top:241px;width:69px;height:26px;border-radius:4px;background:#0a66ff;color:#fff;font-size:13px;line-height:28px;padding-left:7px;-webkit-text-stroke:0.3px #fff">更新报...</div>
<div class="abs" style="left:1559px;top:241px;width:26px;height:26px;border-radius:4px;background:#f0f1f4"></div>
<div class="abs" style="left:1565px;top:252px"><svg width="14" height="3" viewBox="0 0 14 3" ><circle cx="1.5" cy="1.5" r="1.25" fill="#3a3a3a"/><circle cx="7" cy="1.5" r="1.25" fill="#3a3a3a"/><circle cx="12.5" cy="1.5" r="1.25" fill="#3a3a3a"/></svg></div>
<div class="abs" style="left:0;top:273px;width:1591px;height:1px;background:#e2e2e4"></div>
<div class="abs" style="left:9px;top:283px;width:16px;height:16px;border:1px solid #a9acb8;border-radius:2px;background:#fff"></div>
<div class="t" style="left:45px;top:287px;width:132px;overflow:hidden;font-size:13px;letter-spacing:0px;color:#151515">豪阁材料公司</div>
<div class="t" style="left:195px;top:287px;width:132px;overflow:hidden;font-size:13px;letter-spacing:-0.15px;color:#151515">C-20220607-0000013</div>
<div class="t" style="left:345px;top:287px;width:132px;overflow:hidden;font-size:13px;letter-spacing:0px;color:#151515">物联芯温室智慧种植云管</div>
<div class="t" style="left:495px;top:287px;width:132px;overflow:hidden;font-size:13px;letter-spacing:-0.15px;color:#151515">SJ0000013</div>
<div class="t" style="left:645px;top:287px;width:132px;overflow:hidden;font-size:13px;letter-spacing:0px;color:#151515"></div>
<div class="t" style="left:795px;top:287px;width:282px;overflow:hidden;font-size:13px;letter-spacing:0px;color:#151515">山西省-阳泉市-城区-街道108号</div>
<div class="t" style="left:1095px;top:287px;width:146px;overflow:hidden;font-size:13px;letter-spacing:-0.15px;color:#151515">BJ-C-20220607-000001</div>
<div class="t" style="left:1245px;top:287px;width:83px;overflow:hidden;font-size:13px;letter-spacing:0px;color:#151515">1</div>
<div class="abs" style="left:1343px;top:280px;width:60px;height:26px;border-radius:4px;background:#0a66ff;color:#fff;font-size:13px;line-height:28px;padding-left:7px;-webkit-text-stroke:0.3px #fff">新增...</div>
<div class="abs" style="left:1409px;top:280px;width:69px;height:26px;border-radius:4px;background:#0a66ff;color:#fff;font-size:13px;line-height:28px;padding-left:7px;-webkit-text-stroke:0.3px #fff">产品报...</div>
<div class="abs" style="left:1484px;top:280px;width:69px;height:26px;border-radius:4px;background:#0a66ff;color:#fff;font-size:13px;line-height:28px;padding-left:7px;-webkit-text-stroke:0.3px #fff">更新报...</div>
<div class="abs" style="left:1559px;top:280px;width:26px;height:26px;border-radius:4px;background:#f0f1f4"></div>
<div class="abs" style="left:1565px;top:291px"><svg width="14" height="3" viewBox="0 0 14 3" ><circle cx="1.5" cy="1.5" r="1.25" fill="#3a3a3a"/><circle cx="7" cy="1.5" r="1.25" fill="#3a3a3a"/><circle cx="12.5" cy="1.5" r="1.25" fill="#3a3a3a"/></svg></div>
<div class="abs" style="left:0;top:312px;width:1591px;height:1px;background:#e2e2e4"></div>
<div class="abs" style="left:9px;top:322px;width:16px;height:16px;border:1px solid #a9acb8;border-radius:2px;background:#fff"></div>
<div class="t" style="left:45px;top:326px;width:132px;overflow:hidden;font-size:13px;letter-spacing:0px;color:#151515">新昌环保公司</div>
<div class="t" style="left:195px;top:326px;width:132px;overflow:hidden;font-size:13px;letter-spacing:-0.15px;color:#151515">C-20220607-0000012</div>
<div class="t" style="left:345px;top:326px;width:132px;overflow:hidden;font-size:13px;letter-spacing:0px;color:#151515">大数据分析中间件平台开</div>
<div class="t" style="left:495px;top:326px;width:132px;overflow:hidden;font-size:13px;letter-spacing:-0.15px;color:#151515">SJ0000012</div>
<div class="t" style="left:645px;top:326px;width:132px;overflow:hidden;font-size:13px;letter-spacing:0px;color:#151515"></div>
<div class="t" style="left:795px;top:326px;width:282px;overflow:hidden;font-size:13px;letter-spacing:0px;color:#151515">山西省-阳泉市-矿区-街道108号</div>
<div class="t" style="left:1095px;top:326px;width:146px;overflow:hidden;font-size:13px;letter-spacing:-0.15px;color:#151515">BJ-C-20220607-000001</div>
<div class="t" style="left:1245px;top:326px;width:83px;overflow:hidden;font-size:13px;letter-spacing:0px;color:#151515">1</div>
<div class="abs" style="left:1343px;top:319px;width:60px;height:26px;border-radius:4px;background:#f0f0f0;border:1px solid #e0e0e0;color:#a8a8a8;font-size:13px;line-height:26px;padding-left:6px">新增...</div>
<div class="abs" style="left:1409px;top:319px;width:69px;height:26px;border-radius:4px;background:#0a66ff;color:#fff;font-size:13px;line-height:28px;padding-left:7px;-webkit-text-stroke:0.3px #fff">产品报...</div>
<div class="abs" style="left:1484px;top:319px;width:69px;height:26px;border-radius:4px;background:#0a66ff;color:#fff;font-size:13px;line-height:28px;padding-left:7px;-webkit-text-stroke:0.3px #fff">更新报...</div>
<div class="abs" style="left:1559px;top:319px;width:26px;height:26px;border-radius:4px;background:#f0f1f4"></div>
<div class="abs" style="left:1565px;top:330px"><svg width="14" height="3" viewBox="0 0 14 3" ><circle cx="1.5" cy="1.5" r="1.25" fill="#3a3a3a"/><circle cx="7" cy="1.5" r="1.25" fill="#3a3a3a"/><circle cx="12.5" cy="1.5" r="1.25" fill="#3a3a3a"/></svg></div>
<div class="abs" style="left:0;top:351px;width:1591px;height:1px;background:#e2e2e4"></div>
<div class="abs" style="left:9px;top:361px;width:16px;height:16px;border:1px solid #a9acb8;border-radius:2px;background:#fff"></div>
<div class="t" style="left:45px;top:365px;width:132px;overflow:hidden;font-size:13px;letter-spacing:0px;color:#151515">恒大方材料公司</div>
<div class="t" style="left:195px;top:365px;width:132px;overflow:hidden;font-size:13px;letter-spacing:-0.15px;color:#151515">C-20220607-0000011</div>
<div class="t" style="left:345px;top:365px;width:132px;overflow:hidden;font-size:13px;letter-spacing:0px;color:#151515">“约时间”p2p时间交换平</div>
<div class="t" style="left:495px;top:365px;width:132px;overflow:hidden;font-size:13px;letter-spacing:-0.15px;color:#151515">SJ0000011</div>
<div class="t" style="left:645px;top:365px;width:132px;overflow:hidden;font-size:13px;letter-spacing:0px;color:#151515"></div>
<div class="t" style="left:795px;top:365px;width:282px;overflow:hidden;font-size:13px;letter-spacing:0px;color:#151515">天津市-天津市-河北区-街道103号</div>
<div class="t" style="left:1095px;top:365px;width:146px;overflow:hidden;font-size:13px;letter-spacing:-0.15px;color:#151515">BJ-C-20220607-000001</div>
<div class="t" style="left:1245px;top:365px;width:83px;overflow:hidden;font-size:13px;letter-spacing:0px;color:#151515">1</div>
<div class="abs" style="left:1343px;top:358px;width:60px;height:26px;border-radius:4px;background:#f0f0f0;border:1px solid #e0e0e0;color:#a8a8a8;font-size:13px;line-height:26px;padding-left:6px">新增...</div>
<div class="abs" style="left:1409px;top:358px;width:69px;height:26px;border-radius:4px;background:#0a66ff;color:#fff;font-size:13px;line-height:28px;padding-left:7px;-webkit-text-stroke:0.3px #fff">产品报...</div>
<div class="abs" style="left:1484px;top:358px;width:69px;height:26px;border-radius:4px;background:#0a66ff;color:#fff;font-size:13px;line-height:28px;padding-left:7px;-webkit-text-stroke:0.3px #fff">更新报...</div>
<div class="abs" style="left:1559px;top:358px;width:26px;height:26px;border-radius:4px;background:#f0f1f4"></div>
<div class="abs" style="left:1565px;top:369px"><svg width="14" height="3" viewBox="0 0 14 3" ><circle cx="1.5" cy="1.5" r="1.25" fill="#3a3a3a"/><circle cx="7" cy="1.5" r="1.25" fill="#3a3a3a"/><circle cx="12.5" cy="1.5" r="1.25" fill="#3a3a3a"/></svg></div>
<div class="abs" style="left:0;top:390px;width:1591px;height:1px;background:#e2e2e4"></div>
<div class="abs" style="left:9px;top:400px;width:16px;height:16px;border:1px solid #a9acb8;border-radius:2px;background:#fff"></div>
<div class="t" style="left:45px;top:404px;width:132px;overflow:hidden;font-size:13px;letter-spacing:0px;color:#151515">凡人有限公司</div>
<div class="t" style="left:195px;top:404px;width:132px;overflow:hidden;font-size:13px;letter-spacing:-0.15px;color:#151515">C-20220607-0000010</div>
<div class="t" style="left:345px;top:404px;width:132px;overflow:hidden;font-size:13px;letter-spacing:0px;color:#151515">指尖上的陶艺</div>
<div class="t" style="left:495px;top:404px;width:132px;overflow:hidden;font-size:13px;letter-spacing:-0.15px;color:#151515">SJ0000010</div>
<div class="t" style="left:645px;top:404px;width:132px;overflow:hidden;font-size:13px;letter-spacing:0px;color:#151515"></div>
<div class="t" style="left:795px;top:404px;width:282px;overflow:hidden;font-size:13px;letter-spacing:0px;color:#151515">天津市-天津市-河东区-街道104号</div>
<div class="t" style="left:1095px;top:404px;width:146px;overflow:hidden;font-size:13px;letter-spacing:-0.15px;color:#151515">BJ-C-20220607-000001</div>
<div class="t" style="left:1245px;top:404px;width:83px;overflow:hidden;font-size:13px;letter-spacing:0px;color:#151515">1</div>
<div class="abs" style="left:1343px;top:397px;width:60px;height:26px;border-radius:4px;background:#0a66ff;color:#fff;font-size:13px;line-height:28px;padding-left:7px;-webkit-text-stroke:0.3px #fff">新增...</div>
<div class="abs" style="left:1409px;top:397px;width:69px;height:26px;border-radius:4px;background:#0a66ff;color:#fff;font-size:13px;line-height:28px;padding-left:7px;-webkit-text-stroke:0.3px #fff">产品报...</div>
<div class="abs" style="left:1484px;top:397px;width:69px;height:26px;border-radius:4px;background:#0a66ff;color:#fff;font-size:13px;line-height:28px;padding-left:7px;-webkit-text-stroke:0.3px #fff">更新报...</div>
<div class="abs" style="left:1559px;top:397px;width:26px;height:26px;border-radius:4px;background:#f0f1f4"></div>
<div class="abs" style="left:1565px;top:408px"><svg width="14" height="3" viewBox="0 0 14 3" ><circle cx="1.5" cy="1.5" r="1.25" fill="#3a3a3a"/><circle cx="7" cy="1.5" r="1.25" fill="#3a3a3a"/><circle cx="12.5" cy="1.5" r="1.25" fill="#3a3a3a"/></svg></div>
<div class="abs" style="left:0;top:429px;width:1591px;height:1px;background:#e2e2e4"></div>
<div class="abs" style="left:9px;top:439px;width:16px;height:16px;border:1px solid #a9acb8;border-radius:2px;background:#fff"></div>
<div class="t" style="left:45px;top:443px;width:132px;overflow:hidden;font-size:13px;letter-spacing:0px;color:#151515">落日有限公司</div>
<div class="t" style="left:195px;top:443px;width:132px;overflow:hidden;font-size:13px;letter-spacing:-0.15px;color:#151515">C-20220607-0000009</div>
<div class="t" style="left:345px;top:443px;width:132px;overflow:hidden;font-size:13px;letter-spacing:0px;color:#151515">电力互联网故障自愈控制</div>
<div class="t" style="left:495px;top:443px;width:132px;overflow:hidden;font-size:13px;letter-spacing:-0.15px;color:#151515">SJ0000009</div>
<div class="t" style="left:645px;top:443px;width:132px;overflow:hidden;font-size:13px;letter-spacing:0px;color:#151515"></div>
<div class="t" style="left:795px;top:443px;width:282px;overflow:hidden;font-size:13px;letter-spacing:0px;color:#151515">内蒙古自治区-乌海市-乌达区-街道102号</div>
<div class="t" style="left:1095px;top:443px;width:146px;overflow:hidden;font-size:13px;letter-spacing:-0.15px;color:#151515">BJ-C-20220607-000001</div>
<div class="t" style="left:1245px;top:443px;width:83px;overflow:hidden;font-size:13px;letter-spacing:0px;color:#151515">1</div>
<div class="abs" style="left:1343px;top:436px;width:60px;height:26px;border-radius:4px;background:#0a66ff;color:#fff;font-size:13px;line-height:28px;padding-left:7px;-webkit-text-stroke:0.3px #fff">新增...</div>
<div class="abs" style="left:1409px;top:436px;width:69px;height:26px;border-radius:4px;background:#0a66ff;color:#fff;font-size:13px;line-height:28px;padding-left:7px;-webkit-text-stroke:0.3px #fff">产品报...</div>
<div class="abs" style="left:1484px;top:436px;width:69px;height:26px;border-radius:4px;background:#0a66ff;color:#fff;font-size:13px;line-height:28px;padding-left:7px;-webkit-text-stroke:0.3px #fff">更新报...</div>
<div class="abs" style="left:1559px;top:436px;width:26px;height:26px;border-radius:4px;background:#f0f1f4"></div>
<div class="abs" style="left:1565px;top:447px"><svg width="14" height="3" viewBox="0 0 14 3" ><circle cx="1.5" cy="1.5" r="1.25" fill="#3a3a3a"/><circle cx="7" cy="1.5" r="1.25" fill="#3a3a3a"/><circle cx="12.5" cy="1.5" r="1.25" fill="#3a3a3a"/></svg></div>
<div class="abs" style="left:0;top:468px;width:1591px;height:1px;background:#e2e2e4"></div>
<div class="abs" style="left:9px;top:478px;width:16px;height:16px;border:1px solid #a9acb8;border-radius:2px;background:#fff"></div>
<div class="t" style="left:45px;top:482px;width:132px;overflow:hidden;font-size:13px;letter-spacing:0px;color:#151515">旭阳有限公司</div>
<div class="t" style="left:195px;top:482px;width:132px;overflow:hidden;font-size:13px;letter-spacing:-0.15px;color:#151515">C-20220607-0000008</div>
<div class="t" style="left:345px;top:482px;width:132px;overflow:hidden;font-size:13px;letter-spacing:0px;color:#151515">电动汽车智能充电网络</div>
<div class="t" style="left:495px;top:482px;width:132px;overflow:hidden;font-size:13px;letter-spacing:-0.15px;color:#151515">SJ0000008</div>
<div class="t" style="left:645px;top:482px;width:132px;overflow:hidden;font-size:13px;letter-spacing:0px;color:#151515"></div>
<div class="t" style="left:795px;top:482px;width:282px;overflow:hidden;font-size:13px;letter-spacing:0px;color:#151515">山西省-阳泉市-矿区-街道154号</div>
<div class="t" style="left:1095px;top:482px;width:146px;overflow:hidden;font-size:13px;letter-spacing:-0.15px;color:#151515">BJ-C-20220607-000001</div>
<div class="t" style="left:1245px;top:482px;width:83px;overflow:hidden;font-size:13px;letter-spacing:0px;color:#151515">1</div>
<div class="abs" style="left:1343px;top:475px;width:60px;height:26px;border-radius:4px;background:#0a66ff;color:#fff;font-size:13px;line-height:28px;padding-left:7px;-webkit-text-stroke:0.3px #fff">新增...</div>
<div class="abs" style="left:1409px;top:475px;width:69px;height:26px;border-radius:4px;background:#0a66ff;color:#fff;font-size:13px;line-height:28px;padding-left:7px;-webkit-text-stroke:0.3px #fff">产品报...</div>
<div class="abs" style="left:1484px;top:475px;width:69px;height:26px;border-radius:4px;background:#0a66ff;color:#fff;font-size:13px;line-height:28px;padding-left:7px;-webkit-text-stroke:0.3px #fff">更新报...</div>
<div class="abs" style="left:1559px;top:475px;width:26px;height:26px;border-radius:4px;background:#f0f1f4"></div>
<div class="abs" style="left:1565px;top:486px"><svg width="14" height="3" viewBox="0 0 14 3" ><circle cx="1.5" cy="1.5" r="1.25" fill="#3a3a3a"/><circle cx="7" cy="1.5" r="1.25" fill="#3a3a3a"/><circle cx="12.5" cy="1.5" r="1.25" fill="#3a3a3a"/></svg></div>
<div class="abs" style="left:0;top:507px;width:1591px;height:1px;background:#e2e2e4"></div>
<div class="abs" style="left:9px;top:517px;width:16px;height:16px;border:1px solid #a9acb8;border-radius:2px;background:#fff"></div>
<div class="t" style="left:45px;top:521px;width:132px;overflow:hidden;font-size:13px;letter-spacing:0px;color:#151515">英才有限公司</div>
<div class="t" style="left:195px;top:521px;width:132px;overflow:hidden;font-size:13px;letter-spacing:-0.15px;color:#151515">C-20220607-0000007</div>
<div class="t" style="left:345px;top:521px;width:132px;overflow:hidden;font-size:13px;letter-spacing:0px;color:#151515">农二代的020</div>
<div class="t" style="left:495px;top:521px;width:132px;overflow:hidden;font-size:13px;letter-spacing:-0.15px;color:#151515">SJ0000007</div>
<div class="t" style="left:645px;top:521px;width:132px;overflow:hidden;font-size:13px;letter-spacing:0px;color:#151515"></div>
<div class="t" style="left:795px;top:521px;width:282px;overflow:hidden;font-size:13px;letter-spacing:0px;color:#151515">重庆市-重庆市-涪陵区-街道2015号</div>
<div class="t" style="left:1095px;top:521px;width:146px;overflow:hidden;font-size:13px;letter-spacing:-0.15px;color:#151515">BJ-C-20220607-000001</div>
<div class="t" style="left:1245px;top:521px;width:83px;overflow:hidden;font-size:13px;letter-spacing:0px;color:#151515">1</div>
<div class="abs" style="left:1343px;top:514px;width:60px;height:26px;border-radius:4px;background:#0a66ff;color:#fff;font-size:13px;line-height:28px;padding-left:7px;-webkit-text-stroke:0.3px #fff">新增...</div>
<div class="abs" style="left:1409px;top:514px;width:69px;height:26px;border-radius:4px;background:#0a66ff;color:#fff;font-size:13px;line-height:28px;padding-left:7px;-webkit-text-stroke:0.3px #fff">产品报...</div>
<div class="abs" style="left:1484px;top:514px;width:69px;height:26px;border-radius:4px;background:#0a66ff;color:#fff;font-size:13px;line-height:28px;padding-left:7px;-webkit-text-stroke:0.3px #fff">更新报...</div>
<div class="abs" style="left:1559px;top:514px;width:26px;height:26px;border-radius:4px;background:#f0f1f4"></div>
<div class="abs" style="left:1565px;top:525px"><svg width="14" height="3" viewBox="0 0 14 3" ><circle cx="1.5" cy="1.5" r="1.25" fill="#3a3a3a"/><circle cx="7" cy="1.5" r="1.25" fill="#3a3a3a"/><circle cx="12.5" cy="1.5" r="1.25" fill="#3a3a3a"/></svg></div>
<div class="abs" style="left:0;top:546px;width:1591px;height:1px;background:#e2e2e4"></div>
<div class="abs" style="left:9px;top:556px;width:16px;height:16px;border:1px solid #a9acb8;border-radius:2px;background:#fff"></div>
<div class="t" style="left:45px;top:560px;width:132px;overflow:hidden;font-size:13px;letter-spacing:0px;color:#151515">腾骏材料有限公司</div>
<div class="t" style="left:195px;top:560px;width:132px;overflow:hidden;font-size:13px;letter-spacing:-0.15px;color:#151515">C-20220607-0000006</div>
<div class="t" style="left:345px;top:560px;width:132px;overflow:hidden;font-size:13px;letter-spacing:0px;color:#151515">沃木有限责任公司无线传</div>
<div class="t" style="left:495px;top:560px;width:132px;overflow:hidden;font-size:13px;letter-spacing:-0.15px;color:#151515">SJ0000006</div>
<div class="t" style="left:645px;top:560px;width:132px;overflow:hidden;font-size:13px;letter-spacing:0px;color:#151515"></div>
<div class="t" style="left:795px;top:560px;width:282px;overflow:hidden;font-size:13px;letter-spacing:0px;color:#151515">云南省-昭通市-盐津县-街道1326号</div>
<div class="t" style="left:1095px;top:560px;width:146px;overflow:hidden;font-size:13px;letter-spacing:-0.15px;color:#151515">BJ-C-20220607-000001</div>
<div class="t" style="left:1245px;top:560px;width:83px;overflow:hidden;font-size:13px;letter-spacing:0px;color:#151515">1</div>
<div class="abs" style="left:1343px;top:553px;width:60px;height:26px;border-radius:4px;background:#0a66ff;color:#fff;font-size:13px;line-height:28px;padding-left:7px;-webkit-text-stroke:0.3px #fff">新增...</div>
<div class="abs" style="left:1409px;top:553px;width:69px;height:26px;border-radius:4px;background:#0a66ff;color:#fff;font-size:13px;line-height:28px;padding-left:7px;-webkit-text-stroke:0.3px #fff">产品报...</div>
<div class="abs" style="left:1484px;top:553px;width:69px;height:26px;border-radius:4px;background:#0a66ff;color:#fff;font-size:13px;line-height:28px;padding-left:7px;-webkit-text-stroke:0.3px #fff">更新报...</div>
<div class="abs" style="left:1559px;top:553px;width:26px;height:26px;border-radius:4px;background:#f0f1f4"></div>
<div class="abs" style="left:1565px;top:564px"><svg width="14" height="3" viewBox="0 0 14 3" ><circle cx="1.5" cy="1.5" r="1.25" fill="#3a3a3a"/><circle cx="7" cy="1.5" r="1.25" fill="#3a3a3a"/><circle cx="12.5" cy="1.5" r="1.25" fill="#3a3a3a"/></svg></div>
<div class="abs" style="left:0;top:585px;width:1591px;height:1px;background:#e2e2e4"></div>
<div class="abs" style="left:9px;top:595px;width:16px;height:16px;border:1px solid #a9acb8;border-radius:2px;background:#fff"></div>
<div class="t" style="left:45px;top:599px;width:132px;overflow:hidden;font-size:13px;letter-spacing:0px;color:#151515">飞星材料公司</div>
<div class="t" style="left:195px;top:599px;width:132px;overflow:hidden;font-size:13px;letter-spacing:-0.15px;color:#151515">C-20220607-0000005</div>
<div class="t" style="left:345px;top:599px;width:132px;overflow:hidden;font-size:13px;letter-spacing:0px;color:#151515">便携式哮喘病监测系统</div>
<div class="t" style="left:495px;top:599px;width:132px;overflow:hidden;font-size:13px;letter-spacing:-0.15px;color:#151515">SJ0000005</div>
<div class="t" style="left:645px;top:599px;width:132px;overflow:hidden;font-size:13px;letter-spacing:0px;color:#151515"></div>
<div class="t" style="left:795px;top:599px;width:282px;overflow:hidden;font-size:13px;letter-spacing:0px;color:#151515">贵州省-遵义市-播州区-街道150号</div>
<div class="t" style="left:1095px;top:599px;width:146px;overflow:hidden;font-size:13px;letter-spacing:-0.15px;color:#151515">BJ-C-20220607-000001</div>
<div class="t" style="left:1245px;top:599px;width:83px;overflow:hidden;font-size:13px;letter-spacing:0px;color:#151515">1</div>
<div class="abs" style="left:1343px;top:592px;width:60px;height:26px;border-radius:4px;background:#0a66ff;color:#fff;font-size:13px;line-height:28px;padding-left:7px;-webkit-text-stroke:0.3px #fff">新增...</div>
<div class="abs" style="left:1409px;top:592px;width:69px;height:26px;border-radius:4px;background:#0a66ff;color:#fff;font-size:13px;line-height:28px;padding-left:7px;-webkit-text-stroke:0.3px #fff">产品报...</div>
<div class="abs" style="left:1484px;top:592px;width:69px;height:26px;border-radius:4px;background:#0a66ff;color:#fff;font-size:13px;line-height:28px;padding-left:7px;-webkit-text-stroke:0.3px #fff">更新报...</div>
<div class="abs" style="left:1559px;top:592px;width:26px;height:26px;border-radius:4px;background:#f0f1f4"></div>
<div class="abs" style="left:1565px;top:603px"><svg width="14" height="3" viewBox="0 0 14 3" ><circle cx="1.5" cy="1.5" r="1.25" fill="#3a3a3a"/><circle cx="7" cy="1.5" r="1.25" fill="#3a3a3a"/><circle cx="12.5" cy="1.5" r="1.25" fill="#3a3a3a"/></svg></div>
</div>
<div class="t" style="left:337px;top:194px;font-size:13px;font-weight:bold;color:#151515">客户名称</div>
<div class="t" style="left:487px;top:194px;font-size:13px;font-weight:bold;color:#151515">客户编号</div>
<div class="t" style="left:637px;top:194px;font-size:13px;font-weight:bold;color:#151515">商机名称</div>
<div class="t" style="left:787px;top:194px;font-size:13px;font-weight:bold;color:#151515">商机编号</div>
<div class="t" style="left:937px;top:194px;font-size:13px;font-weight:bold;color:#151515">负责人</div>
<div class="t" style="left:1087px;top:194px;font-size:13px;font-weight:bold;color:#151515">客户地址</div>
<div class="t" style="left:1387px;top:194px;font-size:13px;font-weight:bold;color:#151515">报价单编号</div>
<div class="t" style="left:1537px;top:194px;font-size:13px;font-weight:bold;color:#151515">第几次报价</div>
<div class="t" style="left:1635px;top:194px;font-size:13px;font-weight:bold;color:#151515">操作</div>
<div class="abs" style="left:301px;top:190px;width:16px;height:16px;border:1px solid #a9acb8;border-radius:2px;background:#fff"></div>
<div class="abs" style="left:292px;top:165px;width:1591px;height:1px;background:#e2e2e4"></div>
<div class="abs" style="left:292px;top:234px;width:1591px;height:1px;background:#e2e2e4"></div>
<div class="abs" style="left:292px;top:837px;width:1591px;height:1px;background:#e2e2e4"></div>
<div class="abs" style="left:292px;top:871px;width:1591px;height:1px;background:#e2e2e4"></div>
<div class="abs" style="left:292px;top:165px;width:1px;height:706px;background:#e2e2e4"></div>
<div class="abs" style="left:327px;top:165px;width:2px;height:706px;background:#e2e2e4"></div>
<div class="abs" style="left:478px;top:165px;width:1px;height:706px;background:#e2e2e4"></div>
<div class="abs" style="left:628px;top:165px;width:1px;height:706px;background:#e2e2e4"></div>
<div class="abs" style="left:778px;top:165px;width:1px;height:706px;background:#e2e2e4"></div>
<div class="abs" style="left:928px;top:165px;width:1px;height:706px;background:#e2e2e4"></div>
<div class="abs" style="left:1078px;top:165px;width:1px;height:706px;background:#e2e2e4"></div>
<div class="abs" style="left:1378px;top:165px;width:1px;height:706px;background:#e2e2e4"></div>
<div class="abs" style="left:1528px;top:165px;width:1px;height:706px;background:#e2e2e4"></div>
<div class="abs" style="left:1629px;top:165px;width:1px;height:706px;background:#e2e2e4"></div>
<div class="abs" style="left:1883px;top:165px;width:1px;height:706px;background:#e2e2e4"></div>
<div class="abs" style="left:1883px;top:166px;width:8px;height:586px;border-radius:4px;background:#b3b3b3"></div>
<div class="abs" style="left:293px;top:872px;width:558px;height:8px;border-radius:4px;background:#b3b3b3"></div>
<div class="abs" style="left:1752px;top:269px;width:125px;height:76px;background:#fff;border-radius:4px;box-shadow:0 2px 8px rgba(0,0,0,0.10)"></div>
<div class="t" style="left:1763px;top:283px;font-size:14px;color:#2a6ff0">消息推送</div>
<div class="t" style="left:1763px;top:317px;font-size:14px;color:#2a6ff0">打印</div>
<div class="abs" style="left:292px;top:902px;width:30px;height:34px;border:1px solid #dcdde0;border-radius:4px;background:#fff"></div>
<div class="abs" style="left:300px;top:911px"><svg width="13" height="11" viewBox="0 0 13 11" ><path d="M2.5 0.5V10.5M0.5 2.5L2.5 0.5L4.5 2.5M0.5 8.5L2.5 10.5L4.5 8.5" fill="none" stroke="#333" stroke-width="1.1"/><path d="M6 1.5H12M6 5.5H12M6 9.5H12" stroke="#555" stroke-width="1.3"/></svg></div>
<div class="abs" style="left:346px;top:902px;width:150px;height:34px;border:1px solid #dcdde0;border-radius:4px;background:#fff"></div>
<div class="t" style="left:357px;top:910px;font-size:14px;color:#151515">20 条/页</div>
<div class="abs" style="left:475px;top:914px"><svg width="10" height="7" viewBox="0 0 10 7" ><path d="M0.5 1L5 5.5L9.5 1" fill="none" stroke="#555" stroke-width="1.3"/></svg></div>
<div class="t" style="left:508px;top:911px;font-size:12px;color:#8f959e">共20条数据</div>
<div class="abs" style="left:1689px;top:902px;width:30px;height:34px;border:1px solid #dcdde0;border-radius:4px;background:#fff"></div>
<div class="t" style="left:1700px;top:910px;font-size:14px;color:#151515">1</div>
<div class="t" style="left:1729px;top:910px;font-size:14px;color:#151515">/ 1</div>
<div class="abs" style="left:1766px;top:902px;width:30px;height:34px;border:1px solid #dcdde0;border-radius:4px;background:#fff"></div>
<div class="abs" style="left:1776px;top:912px"><svg width="11" height="11" viewBox="0 0 11 11" ><path d="M5 1L1.5 5.5L5 10M9.5 1L6 5.5L9.5 10" fill="none" stroke="#777" stroke-width="1.1"/></svg></div>
<div class="abs" style="left:1798px;top:902px;width:30px;height:34px;border:1px solid #dcdde0;border-radius:4px;background:#fff"></div>
<div class="abs" style="left:1808px;top:912px"><svg width="11" height="11" viewBox="0 0 11 11" ><path d="M5.5 1L2 5.5L5.5 10" fill="none" stroke="#777" stroke-width="1.1"/></svg></div>
<div class="abs" style="left:1830px;top:902px;width:30px;height:34px;border:1px solid #dcdde0;border-radius:4px;background:#fff"></div>
<div class="abs" style="left:1840px;top:912px"><svg width="11" height="11" viewBox="0 0 11 11" ><path d="M2.5 1L6 5.5L2.5 10" fill="none" stroke="#777" stroke-width="1.1"/></svg></div>
<div class="abs" style="left:1862px;top:902px;width:30px;height:34px;border:1px solid #dcdde0;border-radius:4px;background:#fff"></div>
<div class="abs" style="left:1872px;top:912px"><svg width="11" height="11" viewBox="0 0 11 11" ><path d="M1.5 1L5 5.5L1.5 10M6 1L9.5 5.5L6 10" fill="none" stroke="#777" stroke-width="1.1"/></svg></div>
<div class="abs" style="left:1862px;top:893px"><svg width="13" height="20" viewBox="0 0 13 20" ><path d="M1 1V16L4.5 12.5L7 18.5L9.5 17.5L7 11.5H12Z" fill="#fff" stroke="#222" stroke-width="1.2"/></svg></div>
</body></html>
